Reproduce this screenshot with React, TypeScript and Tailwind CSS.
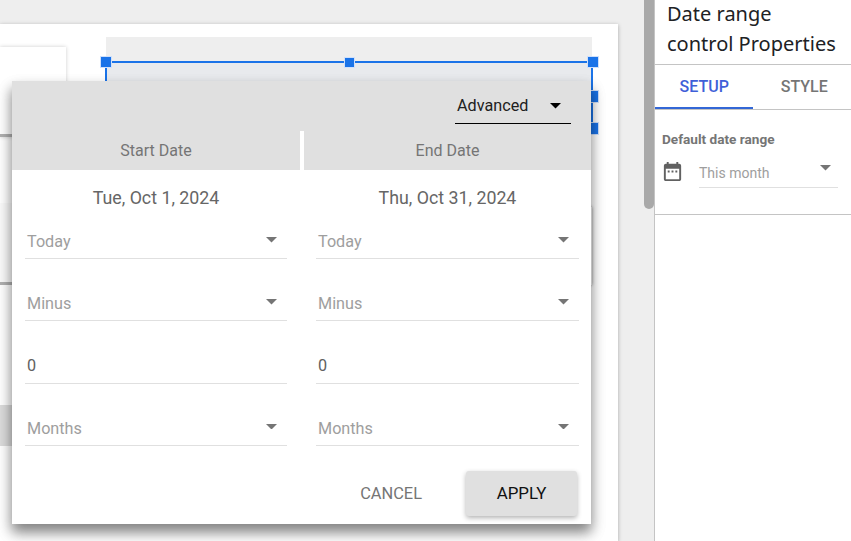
const CaretDown = ({ className }: { className: string }) => (
  <svg viewBox="0 0 10 5" className={className} fill="currentColor">
    <path d="M0 0h10L5 5z" />
  </svg>
);

function Field({ label, dark }: { label: string; dark?: boolean }) {
  return (
    <div className={dark ? "relative flex h-[36px] items-center border-b border-[#e0e0e0] pl-[2px] pt-[1px]" : "relative flex h-[36px] items-center border-b border-[#e0e0e0] pl-[2px] pt-[3px]"}>
      <span className={dark ? "text-[16.2px] text-[#616161]" : "text-[16.2px] text-[#9e9e9e]"}>{label}</span>
      {!dark && <CaretDown className="absolute right-[10px] top-[14px] h-[5.5px] w-[11px] text-[#757575]" />}
    </div>
  );
}

function DateColumn({ date, pad }: { date: string; pad: string }) {
  return (
    <div className={pad}>
      <div className="mb-[15px] mt-[18px] text-center text-[17.8px] leading-[20px] text-[#666666]">{date}</div>
      <div className="flex flex-col gap-[26.33px]">
        <Field label="Today" />
        <Field label="Minus" />
        <Field label="0" dark />
        <Field label="Months" />
      </div>
    </div>
  );
}

function DateDialog() {
  return (
    <div className="absolute left-[12px] top-[57px] w-[579px] bg-white shadow-[0_8px_12px_rgba(0,0,0,0.35),0_8px_14px_rgba(0,0,0,0.22)]">
      {/* header */}
      <div className="flex h-[50px] justify-end bg-[#e0e0e0] pr-[20px]">
        <div className="relative mt-[7px] h-[36px] w-[116px] border-b border-black pl-[2px] pt-[7px] text-[16.2px] leading-[22px] text-[#212121]">
          Advanced
          <CaretDown className="absolute right-[10px] top-[15px] h-[5.5px] w-[11px] text-black" />
        </div>
      </div>
      {/* tabs */}
      <div className="grid h-[39px] grid-cols-[288px_287px] justify-between text-[16px] text-[#757575]">
        <div className="bg-[#e0e0e0] pt-[9px] text-center leading-[22px]">Start Date</div>
        <div className="bg-[#e0e0e0] pt-[9px] text-center leading-[22px]">End Date</div>
      </div>
      <div className="grid grid-cols-[288px_291px]">
        <DateColumn date="Tue, Oct 1, 2024" pad="pl-[13px] pr-[13px]" />
        <DateColumn date="Thu, Oct 31, 2024" pad="pl-[16px] pr-[12px]" />
      </div>
      {/* footer */}
      <div className="mt-[25px] flex items-center justify-end gap-[44px] pb-[8px] pr-[14px]">
        <button className="pt-[1px] text-[16.4px] text-[#757575]">CANCEL</button>
        <button className="h-[45px] w-[111px] rounded-[3px] bg-[#e0e0e0] pt-[1px] text-[16.9px] text-[#111111] shadow-[0_2px_5px_rgba(0,0,0,0.3)]">
          APPLY
        </button>
      </div>
    </div>
  );
}

function Handle({ className }: { className: string }) {
  return <div className={"absolute h-[12px] w-[12px] border border-[#cfe0fb] bg-[#1a73e8] " + className} />;
}

function Canvas() {
  return (
    <div className="relative mt-[24px] h-[517px] w-[618px] bg-white shadow-[0_1px_4px_rgba(0,0,0,0.3)]">
      {/* widgets behind the dialog, placed freely on the report canvas */}
      <div className="absolute left-0 top-[23px] h-[90px] w-[66px] border-b-[3px] border-[#b0b0b0] bg-white shadow-[0_0_4px_rgba(0,0,0,0.2)]" />
      <div className="absolute left-0 top-[179px] h-[82px] w-[12px] border-b-[3px] border-[#b0b0b0] bg-[#fafafa]" />
      <div className="absolute left-0 top-[381px] h-[41px] w-[12px] bg-[#dcdcdc]" />
      <div className="absolute left-[500px] top-[183px] h-[78px] w-[92px] bg-white shadow-[0_0_3px_rgba(0,0,0,0.45)]" />

      {/* selected date range control */}
      <div className="absolute left-[106px] top-[13px] h-[91px] w-[486px] bg-[#eeeeee]">
        <div className="mt-[24px] h-[67px] bg-[#e8eaed]" />
      </div>
      <div className="absolute left-[105px] top-[37px] h-[67px] w-[488px] border-l-2 border-r-2 border-t-2 border-[#1a73e8]" />
      <Handle className="left-[100px] top-[32px]" />
      <Handle className="left-[344px] top-[33px] !h-[11px] !w-[11px]" />
      <Handle className="left-[587px] top-[32px]" />
      <Handle className="left-[587px] top-[66px] !h-[13px]" />
      <Handle className="left-[587px] top-[98px] !h-[13px]" />

      <DateDialog />
    </div>
  );
}

function PropertiesPanel() {
  return (
    <div className="h-[541px] w-[197px] border-l border-[#c4c4c4] bg-white">
      <div className="h-[66px] border-b border-[#c4c4c4] pl-[12px] text-[20px] leading-[30px] text-[#202124] [font-family:'Noto_Sans',sans-serif]">
        <div className="-mt-[1px]">
          Date range
          <br />
          control Properties
        </div>
      </div>
      <div className="flex h-[45px] border-b border-[#c4c4c4] text-[16px] font-medium">
        <div className="flex h-[44px] w-[99px] items-center justify-center border-b-[2px] border-[#3367d6] pt-[1px] text-[#3f5fd8]">SETUP</div>
        <div className="flex h-[43px] w-[98px] items-center justify-center pl-[4px] pt-[1px] text-[#757575]">STYLE</div>
      </div>
      <div className="h-[105px] border-b border-[#c4c4c4]">
        <div className="pl-[7px] pt-[21px] text-[13.6px] font-bold leading-[16px] text-[#757575]">Default date range</div>
        <div className="flex pl-[6px] pr-[13px]">
          <svg viewBox="0 0 24 24" className="mt-[13px] h-[23px] w-[23px] shrink-0" fill="#616161">
            <path d="M9 11H7v2h2v-2zm4 0h-2v2h2v-2zm4 0h-2v2h2v-2zm2-7h-1V2h-2v2H8V2H6v2H5c-1.11 0-1.99.9-1.99 2L3 20c0 1.1.89 2 2 2h14c1.1 0 2-.9 2-2V6c0-1.1-.9-2-2-2zm0 16H5V9h14v11z" />
          </svg>
          <div className="relative ml-[15px] mt-[9px] h-[32px] flex-1 border-b border-[#e0e0e0] pt-[8px] text-[14px] leading-[18px] text-[#9e9e9e]">
            This month
            <CaretDown className="absolute right-[7px] top-[9px] h-[5.5px] w-[11px] text-[#757575]" />
          </div>
        </div>
      </div>
    </div>
  );
}

export default function App() {
  return (
    <div className="flex h-[541px] w-[851px] overflow-hidden bg-[#eeeeee] [font-family:Roboto,sans-serif]">
      <div className="w-[644px] shrink-0 overflow-hidden">
        <Canvas />
      </div>
      <div className="w-[10px] shrink-0">
        <div className="h-[209px] rounded-b-[5px] bg-[#a9a9a9]" />
      </div>
      <PropertiesPanel />
    </div>
  );
}
